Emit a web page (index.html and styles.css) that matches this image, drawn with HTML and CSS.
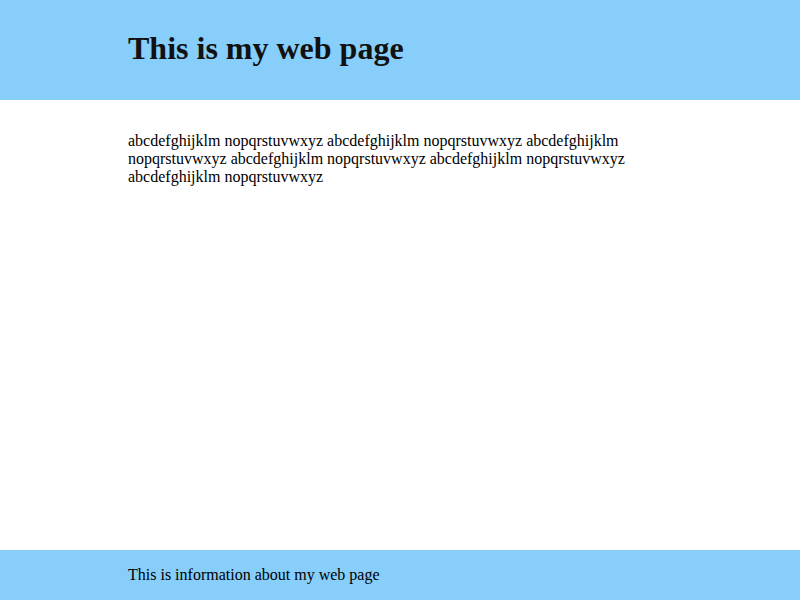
FILE: index.html
```html
<!DOCTYPE html>
<html>
<head>
<meta charset="utf-8">
<title>My web page</title>
<link rel="stylesheet" href="styles.css">
</head>
<body>
<header class="site-header">
  <h1 class="site-title">This is my web page</h1>
</header>
<main class="content">
  <p class="text">abcdefghijklm nopqrstuvwxyz abcdefghijklm nopqrstuvwxyz abcdefghijklm nopqrstuvwxyz abcdefghijklm nopqrstuvwxyz abcdefghijklm nopqrstuvwxyz abcdefghijklm nopqrstuvwxyz</p>
</main>
<footer class="site-footer">
  <p class="footer-text">This is information about my web page</p>
</footer>
</body>
</html>
```
FILE: styles.css
```css
html, body {
  margin: 0;
  padding: 0;
}
body {
  font-family: "Liberation Serif", "Times New Roman", serif;
  font-size: 16px;
  color: #000;
  background: #fff;
  min-height: 100vh;
  display: flex;
  flex-direction: column;
}
.site-header {
  background: #87cefa;
  height: 100px;
  display: flex;
  align-items: center;
  padding: 0 16% 4px;
  box-sizing: border-box;
}
.site-title {
  margin: 0;
  font-size: 32px;
  font-weight: bold;
  color: #111;
}
.content {
  flex: 1;
  padding: 16px 16%;
}
.text {
  margin: 16px 0;
}
.site-footer {
  background: #87cefa;
  height: 50px;
  display: flex;
  align-items: center;
  padding: 0 16%;
  box-sizing: border-box;
}
.footer-text {
  margin: 0;
}
```
